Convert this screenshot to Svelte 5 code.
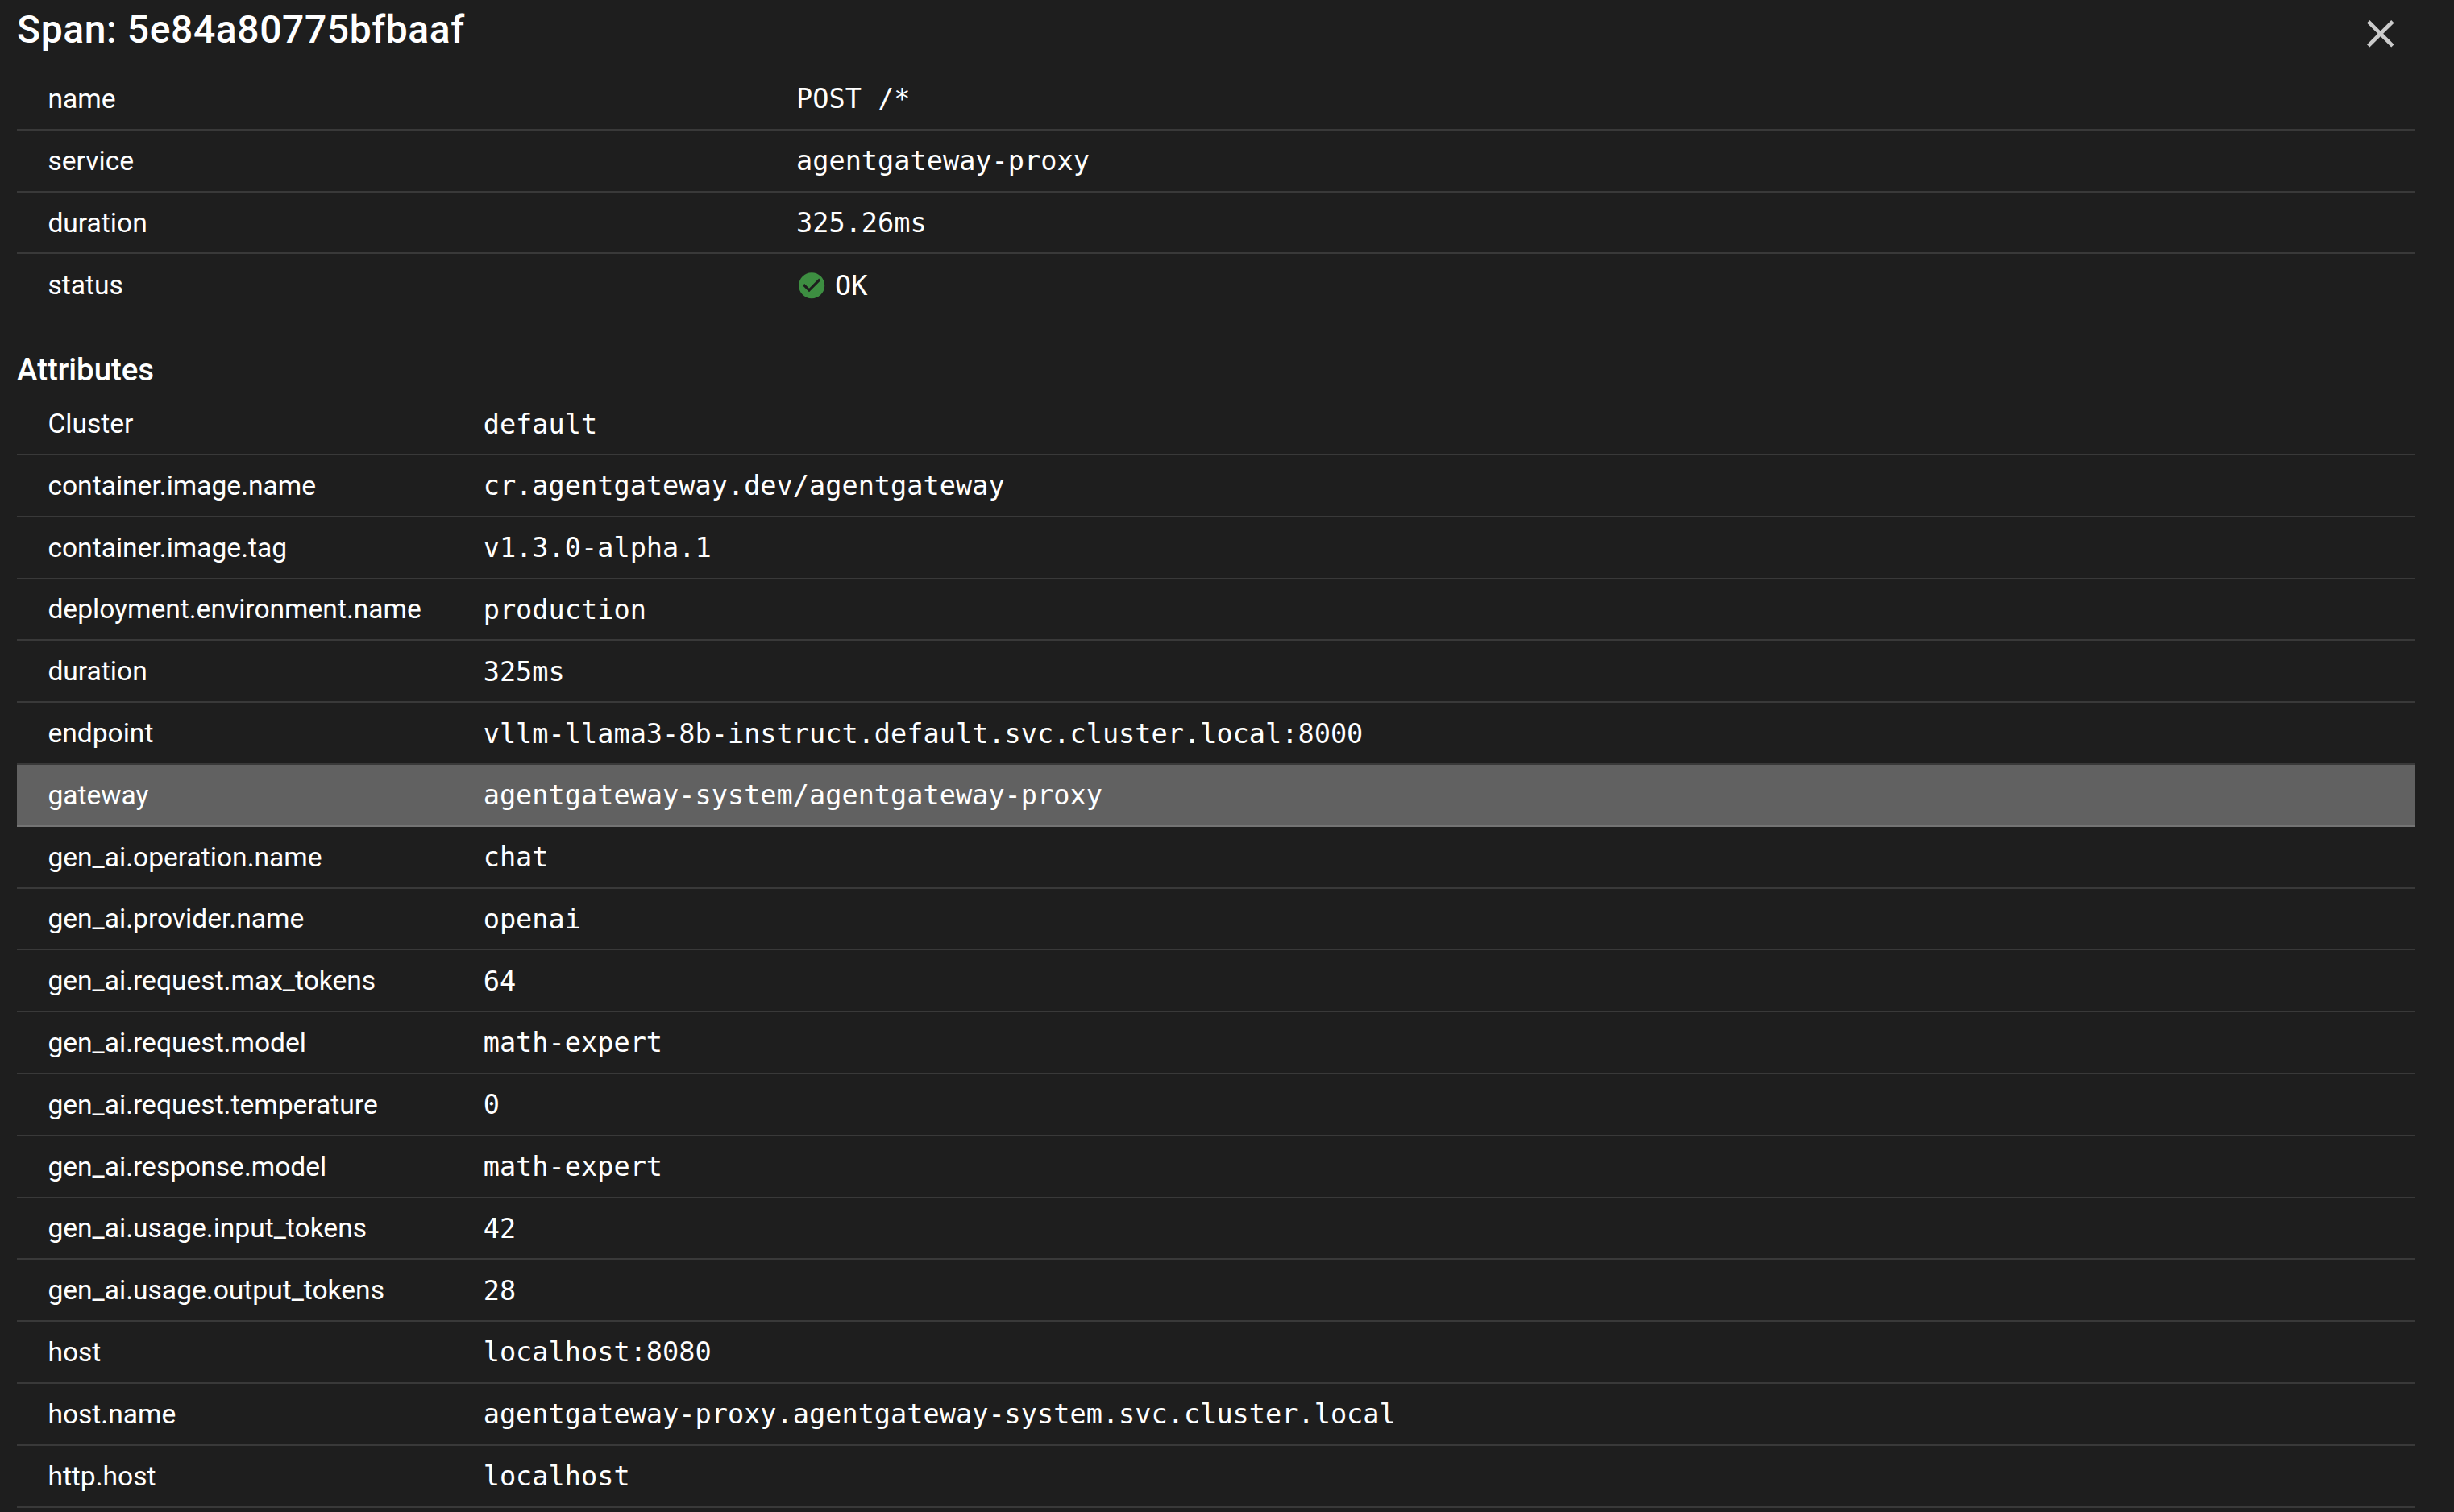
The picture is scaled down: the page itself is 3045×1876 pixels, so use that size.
<script>
  export let spanId = "5e84a80775bfbaaf"

  const summary = [
    { key: "name", value: "POST /*" },
    { key: "service", value: "agentgateway-proxy" },
    { key: "duration", value: "325.26ms" },
    { key: "status", value: "OK", ok: true },
  ]

  const attributes = [
    { key: "Cluster", value: "default" },
    { key: "container.image.name", value: "cr.agentgateway.dev/agentgateway" },
    { key: "container.image.tag", value: "v1.3.0-alpha.1" },
    { key: "deployment.environment.name", value: "production" },
    { key: "duration", value: "325ms" },
    { key: "endpoint", value: "vllm-llama3-8b-instruct.default.svc.cluster.local:8000" },
    { key: "gateway", value: "agentgateway-system/agentgateway-proxy" },
    { key: "gen_ai.operation.name", value: "chat" },
    { key: "gen_ai.provider.name", value: "openai" },
    { key: "gen_ai.request.max_tokens", value: "64" },
    { key: "gen_ai.request.model", value: "math-expert" },
    { key: "gen_ai.request.temperature", value: "0" },
    { key: "gen_ai.response.model", value: "math-expert" },
    { key: "gen_ai.usage.input_tokens", value: "42" },
    { key: "gen_ai.usage.output_tokens", value: "28" },
    { key: "host", value: "localhost:8080" },
    { key: "host.name", value: "agentgateway-proxy.agentgateway-system.svc.cluster.local" },
    { key: "http.host", value: "localhost" },
  ]

  let activeKey = "gateway"

  const handleEnter = (key) => () => {
    activeKey = key
  }
</script>

<div class="panel">
  <header>
    <h2>Span: {spanId}</h2>
    <button aria-label="Close">
      <svg viewBox="0 0 24 24">
        <path d="M19 6.41 17.59 5 12 10.59 6.41 5 5 6.41 10.59 12 5 17.59 6.41 19 12 13.41 17.59 19 19 17.59 13.41 12z" />
      </svg>
    </button>
  </header>

  <dl class="summary">
    {#each summary as item}
      <div class="row">
        <dt>{item.key}</dt>
        <dd>
          {#if item.ok}
            <svg class="ok" viewBox="0 0 24 24">
              <path d="M12 2C6.48 2 2 6.48 2 12s4.48 10 10 10 10-4.48 10-10S17.52 2 12 2zm-2 15-5-5 1.41-1.41L10 14.17l7.59-7.59L19 8l-9 9z" />
            </svg>
          {/if}
          <span>{item.value}</span>
        </dd>
      </div>
    {/each}
  </dl>

  <h3>Attributes</h3>
  <dl class="attributes">
    {#each attributes as item}
      <div
        class="row"
        class:active={activeKey === item.key}
        role="presentation"
        on:mouseenter={handleEnter(item.key)}
      >
        <dt>{item.key}</dt>
        <dd><span>{item.value}</span></dd>
      </div>
    {/each}
  </dl>
</div>

<style>
  :global(body) {
    background: #1e1e1e;
  }

  .panel {
    box-sizing: border-box;
    height: 1876px;
    overflow: hidden;
    padding: 0 48px 0 21px;
    background: #1e1e1e;
    color: #fff;
    font-family: Roboto, sans-serif;
    font-size: 33.6px;
    line-height: 48px;
  }

  header {
    display: flex;
    justify-content: space-between;
    height: 85.05px;
  }

  h2 {
    margin: 0;
    font-size: 48px;
    font-weight: 500;
    line-height: 73.2px;
    letter-spacing: 0.0125em;
  }

  button {
    height: 57.6px;
    margin: 12.6px 14.2px 0 0;
    padding: 0;
    border: 0;
    background: none;
    cursor: pointer;
  }

  button svg {
    display: block;
    width: 57.6px;
    height: 57.6px;
    fill: #cbcbcb;
  }

  dl {
    margin: 0;
  }

  .row {
    box-sizing: border-box;
    display: flex;
    align-items: center;
    height: 76.8px;
    padding: 0 38.4px;
    border-bottom: 2px solid rgba(255, 255, 255, 0.12);
  }

  .summary .row:last-child {
    padding-top: 2px;
    border-bottom-color: transparent;
  }

  .row.active {
    background: #616161;
  }

  dt {
    flex: none;
    width: 540.3px;
    padding-top: 0.8px;
  }

  .summary dt {
    width: 928.6px;
    padding-top: 1.2px;
  }

  dd {
    display: flex;
    align-items: center;
    margin: 0;
    padding-top: 1.9px;
    font-family: "DejaVu Sans Mono", monospace;
  }

  .ok {
    width: 38.4px;
    height: 38.4px;
    margin: -1px 9.6px 0 0;
    fill: #3d8e41;
  }

  h3 {
    margin: 38.35px 0 0;
    padding-bottom: 2px;
    font-size: 38.4px;
    font-weight: 500;
    line-height: 55.6px;
  }
</style>
